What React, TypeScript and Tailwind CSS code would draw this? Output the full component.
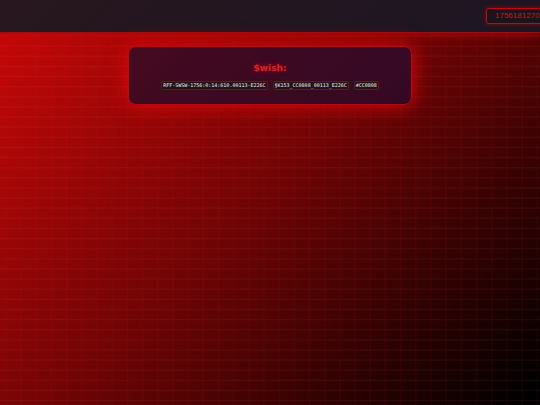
const tags = ["RFF-SWSW-1756:0:14:610.00113-E226C", "§K153_CC0808_00113_E226C", "#CC0808"];

export default function App() {
  return (
    <div className="relative min-h-screen overflow-hidden bg-[linear-gradient(135deg,#cc0808_0%,#6c0405_50%,#000000_98%)] font-['Liberation_Sans',sans-serif]">
      <div className="absolute inset-0 bg-[repeating-linear-gradient(180deg,transparent_0%,transparent_1.1%,rgba(255,120,120,0.07)_1.4%,transparent_1.7%,transparent_2.5%),repeating-linear-gradient(90deg,transparent_0%,transparent_0.85%,rgba(220,20,20,0.07)_1.1%,transparent_1.35%,transparent_2.811%)]" />
      <header className="relative flex h-[33px] items-center justify-end border-b border-[#9c0c14] bg-[linear-gradient(135deg,#28171e,#1c1522)] shadow-[0_0_12px_#b80808]">
        <time className="-mr-4 flex h-4 w-[70px] shrink-0 items-center rounded-[3px] border border-[#b80c12] bg-[#1d131c] pl-2 text-[8px] leading-3 text-[#d81018] shadow-[0_0_5px_rgba(204,8,8,0.6)]">
          1756181270
        </time>
      </header>
      <main className="relative flex justify-center pt-[13px]">
        <section className="flex w-[52.6%] flex-col items-center rounded-lg border border-[#b80814] bg-[linear-gradient(135deg,#450a20,#330824)] px-4 pt-3.5 pb-3.5 shadow-[0_0_20px_#e00808]">
          <h1 className="font-['DejaVu_Sans',sans-serif] text-[9px] leading-3.5 font-bold text-[#d3242b] [text-shadow:0_0_4px_#cc0808]">
            $wish:
          </h1>
          <div className="mt-1.5 flex gap-[5px] whitespace-nowrap">
            {tags.map((tag) => (
              <code
                key={tag}
                className="rounded-[2px] border border-[#7a0c16] bg-[#1f131e] px-px font-['DejaVu_Sans_Mono',monospace] text-[5px] leading-[7px] text-[#ffe8ec]"
              >
                {tag}
              </code>
            ))}
          </div>
        </section>
      </main>
    </div>
  );
}
